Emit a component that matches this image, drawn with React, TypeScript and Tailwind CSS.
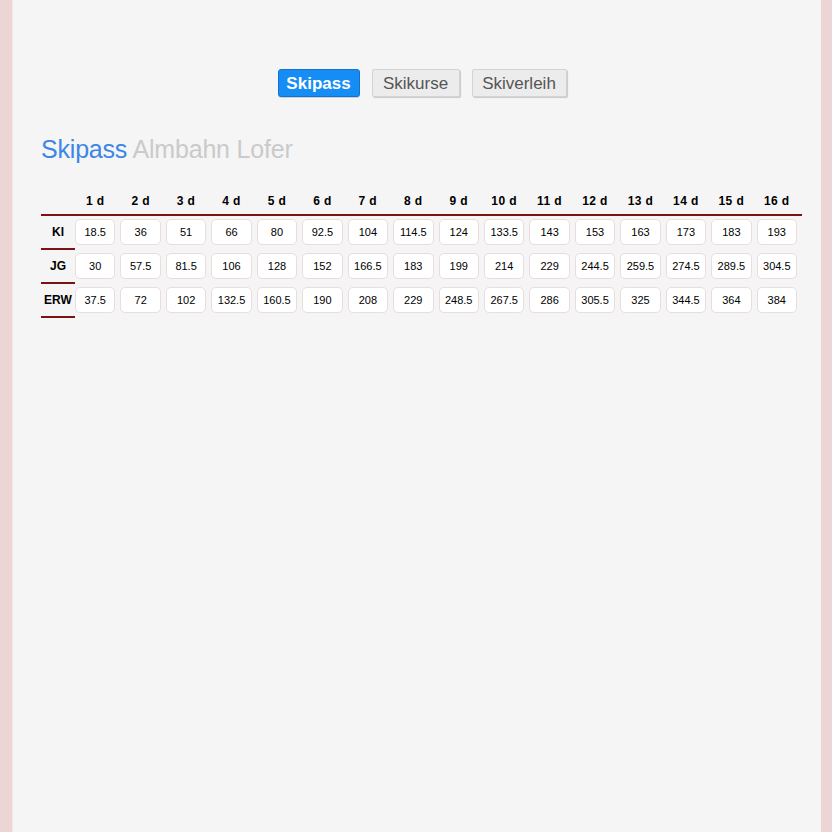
import React from "react";

const days = Array.from({ length: 16 }, (_, i) => `${i + 1} d`);
const rows: { label: string; values: string[] }[] = [
  { label: "KI", values: ["18.5", "36", "51", "66", "80", "92.5", "104", "114.5", "124", "133.5", "143", "153", "163", "173", "183", "193"] },
  { label: "JG", values: ["30", "57.5", "81.5", "106", "128", "152", "166.5", "183", "199", "214", "229", "244.5", "259.5", "274.5", "289.5", "304.5"] },
  { label: "ERW", values: ["37.5", "72", "102", "132.5", "160.5", "190", "208", "229", "248.5", "267.5", "286", "305.5", "325", "344.5", "364", "384"] },
];

export default function App() {
  return (
    <div
      className="min-h-[832px] w-full bg-[#ecd5d5] pl-[12px] flex"
      style={{ fontFamily: '"Liberation Sans", Arial, Helvetica, sans-serif' }}
    >
      <div className="w-[809px] bg-[#f5f5f5] border-l border-[#f3e8e8] min-h-[832px]">
        <div className="flex justify-center gap-[12px] pt-[69px] pl-[10px]">
          <button className="h-[28px] w-[82px] rounded-[3px] bg-[#168cf5] border border-[#1173cf] text-white font-bold text-[17px] leading-none shadow-[0_1px_0_rgba(0,0,0,0.15)]">
            Skipass
          </button>
          <button className="h-[28px] w-[88px] rounded-[2px] bg-[#ececec] border border-[#d3d3d3] text-[#555] font-normal text-[17px] leading-none shadow-[1px_1px_1px_rgba(0,0,0,0.18)]">
            Skikurse
          </button>
          <button className="h-[28px] w-[95px] rounded-[2px] bg-[#ececec] border border-[#d3d3d3] text-[#555] font-normal text-[17px] leading-none shadow-[1px_1px_1px_rgba(0,0,0,0.18)]">
            Skiverleih
          </button>
        </div>

        <h1 className="mt-[36px] ml-[28px] text-[25px] leading-[32px] tracking-[-0.2px]">
          <span className="text-[#3b86e6]">Skipass</span>{" "}
          <span className="text-[#cacaca]">Almbahn Lofer</span>
        </h1>

        <div className="ml-[28px] mt-[26px] w-[761px]">
          <div className="grid grid-cols-[34px_repeat(16,1fr)] border-b-2 border-[#7a1414] h-[25px] items-start">
            <div />
            {days.map((d) => (
              <div key={d} className="pr-[5px] text-center text-[12px] font-bold text-black leading-[14px] pt-[3px] tracking-[0.4px]">
                {d}
              </div>
            ))}
          </div>
          {rows.map((r) => (
            <div key={r.label} className="grid grid-cols-[34px_repeat(16,1fr)] h-[34px]">
              <div className="border-b-2 border-[#7a1414] flex items-center justify-center text-[12px] font-bold text-black">
                {r.label}
              </div>
              {r.values.map((v, i) => (
                <div key={i} className="pr-[5px] pt-[3px]">
                  <div className="h-[26px] rounded-[5px] bg-white border border-[#eadddd] flex items-center justify-center text-[11px] text-black">
                    {v}
                  </div>
                </div>
              ))}
            </div>
          ))}
        </div>
      </div>
    </div>
  );
}
